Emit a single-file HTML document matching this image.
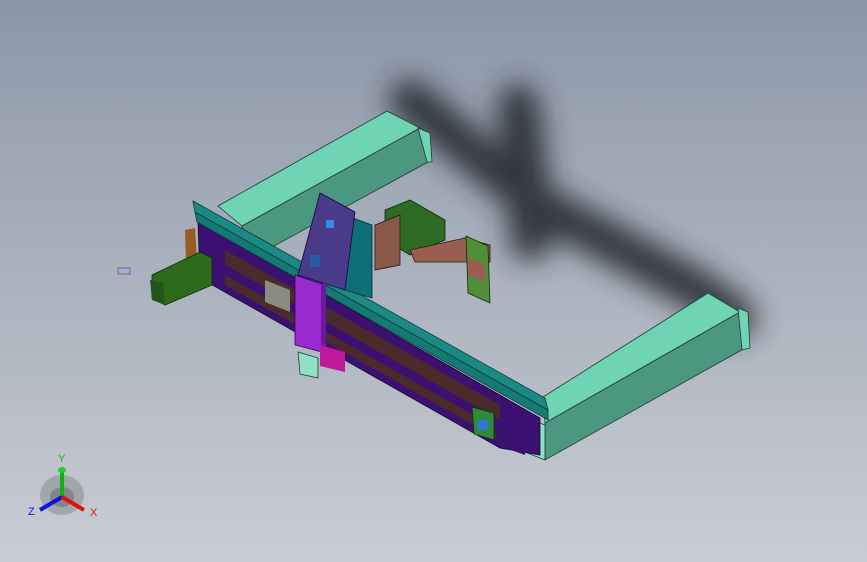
<!DOCTYPE html>
<html><head><style>
html,body{margin:0;padding:0;}
body{width:867px;height:562px;overflow:hidden;background:linear-gradient(180deg,#8b97a8 0%,#a8b0bc 45%,#c9ccd3 100%);font-family:"Liberation Sans",sans-serif;}
svg{position:absolute;left:0;top:0}
</style></head><body>
<svg width="867" height="562" viewBox="0 0 867 562" xmlns="http://www.w3.org/2000/svg">
<defs>
<filter id="b" x="-30%" y="-30%" width="160%" height="160%"><feGaussianBlur stdDeviation="14"/></filter>
</defs>
<!-- shadow -->
<g filter="url(#b)" fill="none" stroke="#262a30" stroke-linecap="round" stroke-linejoin="round" opacity="0.9">
<polyline points="410,100 470,150 530,200 620,248 700,292 735,318" stroke-width="42"/>
<polyline points="518,105 527,170 530,240" stroke-width="42"/>
</g>
<!-- back beam -->
<polygon points="218,206 387,111 420,128 242,226" fill="#6fd4b4" stroke="#1e3a30" stroke-width="0.8"/>
<polygon points="242,226 420,128 428,162 252,258" fill="#4b9780" stroke="#1e3a30" stroke-width="0.8"/>
<polygon points="418,128 430,133 432,162 427,162" fill="#6fd4b4" stroke="#1e3a30" stroke-width="0.8"/>
<!-- right beam -->
<polygon points="543,397 708,293 740,312 545,423" fill="#6fd4b4" stroke="#1e3a30" stroke-width="0.8"/>
<polygon points="545,423 740,312 747,347 545,460" fill="#4b9780" stroke="#1e3a30" stroke-width="0.8"/>
<polygon points="738,308 748,312 750,348 742,350" fill="#6fd4b4" stroke="#1e3a30" stroke-width="0.8"/>
<polygon points="520,415 545,425 545,460 525,452" fill="#8fe0c6" stroke="#1e3a30" stroke-width="0.8"/>
<!-- green board + plate -->
<polygon points="385,210 410,200 445,220 445,240 410,255 385,240" fill="#2f6b25" stroke="#0e2a0a" stroke-width="0.8"/>
<polygon points="375,225 400,215 400,265 375,270" fill="#8a5a48" stroke="#2a1510" stroke-width="0.8"/>
<polygon points="410,250 465,238 490,245 490,262 415,262" fill="#9a5e50" stroke="#2a1510" stroke-width="0.8"/>
<polygon points="466,236 488,246 490,303 468,293" fill="#4f8f3a" stroke="#0e2a0a" stroke-width="0.8"/>
<polygon points="468,258 485,264 485,282 468,276" fill="#9a5e50"/>
<!-- gantry purple body -->
<polygon points="198,222 540,418 540,455 500,448 200,278" fill="#3a1170" stroke="#150530" stroke-width="0.8"/>
<polygon points="225,250 500,405 500,420 225,265" fill="#4a2a2a"/>
<polygon points="225,275 500,430 500,440 225,285" fill="#4a2a2a"/>
<polygon points="185,230 195,228 197,262 186,262" fill="#9a5a22"/>
<polygon points="265,280 290,290 290,312 265,302" fill="#8b8b80"/>
<!-- gantry rail teal -->
<polygon points="193,201 545,398 548,410 195,212" fill="#1c8a84" stroke="#0a3a38" stroke-width="0.8"/>
<polygon points="195,212 548,410 548,420 197,222" fill="#157a74" stroke="#0a3a38" stroke-width="0.8"/>
<!-- end green box -->
<polygon points="472,407 494,413 494,440 474,434" fill="#2e8a3a" stroke="#0e2a0a" stroke-width="0.8"/>
<rect x="478" y="420" width="10" height="10" fill="#2a7ad8"/>
<polygon points="494,420 525,432 525,455 497,445" fill="#3a1170"/>
<!-- motor -->
<polygon points="152,275 200,252 212,258 212,285 165,305 152,298" fill="#2e6a1a" stroke="#0e2a0a" stroke-width="0.8"/>
<polygon points="150,280 163,283 165,305 152,300" fill="#22551a"/>
<path d="M150 280 C140 278 135 275 125 273" stroke="#b0a8d8" stroke-width="2" fill="none"/>
<rect x="118" y="268" width="12" height="6" fill="#b0a8d8" stroke="#333" stroke-width="0.5"/>
<!-- Z axis carriage -->
<polygon points="345,215 372,225 372,298 345,290" fill="#0f6f78" stroke="#052a30" stroke-width="0.8"/>
<polygon points="320,193 355,212 345,290 298,275" fill="#4a3a8a" stroke="#150530" stroke-width="0.8"/>
<polygon points="295,275 322,284 322,352 295,345" fill="#9a2ad0" stroke="#300850" stroke-width="0.8"/>
<polygon points="322,284 326,282 326,354 322,352" fill="#6a1aa0"/>
<polygon points="320,345 345,352 345,372 320,366" fill="#c0189a"/>
<polygon points="298,352 318,358 318,378 300,374" fill="#8fe0c6" stroke="#1e3a30" stroke-width="0.8"/>
<rect x="326" y="220" width="8" height="8" fill="#2a90e8"/>
<rect x="310" y="255" width="10" height="12" fill="#2a5aa0"/>
<!-- triad -->
<g>
<ellipse cx="62" cy="495" rx="22" ry="20" fill="#7a7e86" opacity="0.45"/>
<ellipse cx="62" cy="497" rx="12" ry="10" fill="#555" opacity="0.4"/>
<line x1="62" y1="497" x2="62" y2="470" stroke="#10b010" stroke-width="4"/>
<ellipse cx="62" cy="470" rx="4" ry="3" fill="#20d020"/>
<line x1="62" y1="497" x2="40" y2="510" stroke="#1010e0" stroke-width="4"/>
<line x1="62" y1="497" x2="84" y2="510" stroke="#e01010" stroke-width="4"/>
<text x="58" y="462" font-size="11" fill="#10c010">Y</text>
<text x="28" y="515" font-size="11" fill="#1010e0">Z</text>
<text x="90" y="516" font-size="11" fill="#e01010">X</text>
</g>
</svg>
</body></html>
